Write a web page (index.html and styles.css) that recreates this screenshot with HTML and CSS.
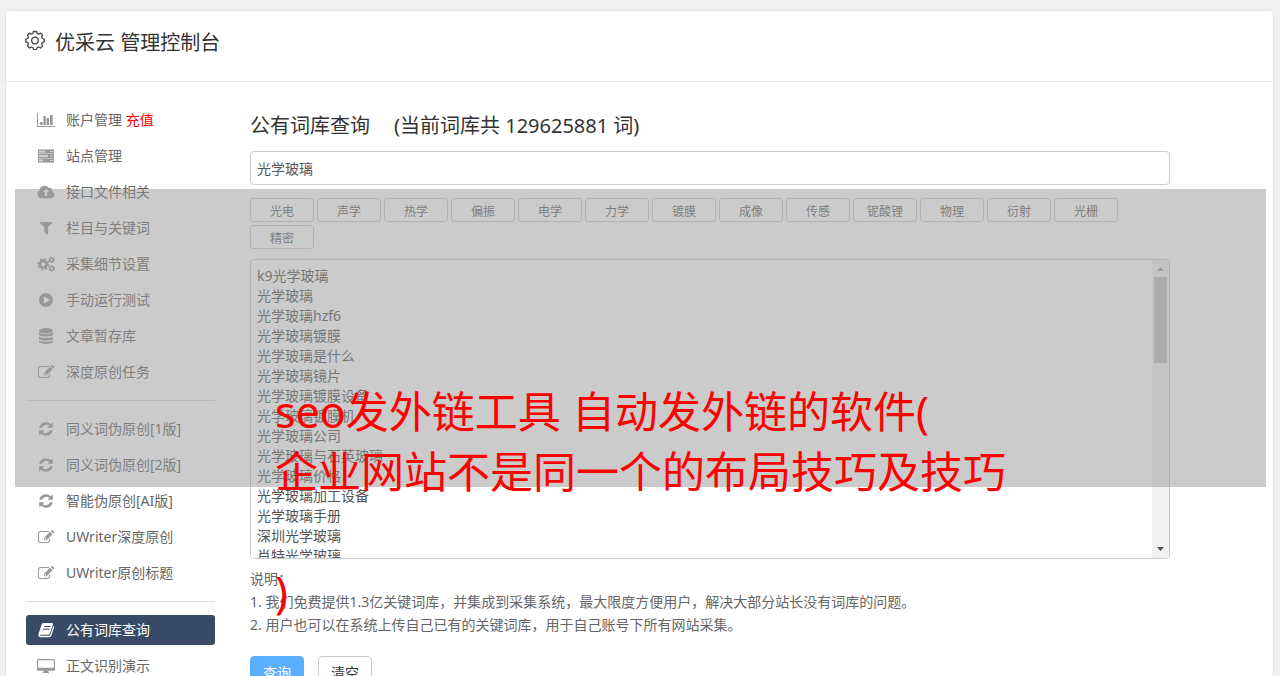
FILE: index.html
```html
<!DOCTYPE html>
<html lang="zh-CN">
<head>
<meta charset="utf-8">
<title>优采云 管理控制台</title>
<link rel="stylesheet" href="styles.css">
</head>
<body>
<svg class="sprite" aria-hidden="true">
  <symbol id="i-chart" viewBox="0 0 20 16"><path d="M1 1h1v13h17v1H1z"/><path d="M4 10h2.500v3H4zM7.300 4h2.400v9H7.300zM10.500 6H13v7h-2.500zM14 3h2.700v10H14z"/></symbol>
  <symbol id="i-server" viewBox="0 0 20 16"><path opacity=".45" d="M2 1.500h16v4H2zM2 6h16v4H2zM2 10.500h16v4H2z"/><path fill-rule="evenodd" d="M2 1.500h16v4H2zM3 2.500v2h6v-2zM14 3v1h3V3zM2 6h16v4H2zM3 7v2h9V7zM14 7.500v1h3v-1zM2 10.500h16v4H2zM3 11.500v2h4v-2zM14 12v1h3v-1z"/></symbol>
  <symbol id="i-cloud" viewBox="0 0 20 16"><path fill-rule="evenodd" d="M5.500 14.300A4.300 4.300 0 0 1 3.600 6.300 4.900 4.900 0 0 1 12.600 4a2.700 2.700 0 0 1 3.500 3.400 3.600 3.600 0 0 1-.9 6.900zM10 4.700 6.500 8.300h2.300v3.700h2.400V8.300h2.300z"/></symbol>
  <symbol id="i-filter" viewBox="0 0 20 16"><path d="M4.500 2h11.300c.6 0 .8.600.4 1L12 7.300v6.900c0 .6-.6.800-1 .4l-2.300-2.200c-.2-.2-.3-.3-.3-.6V7.300L4 3c-.4-.4-.1-1 .5-1z"/></symbol>
  <symbol id="i-cogs" viewBox="0 0 20 16"><circle cx="7.300" cy="8.300" r="3.400" fill="none" stroke="currentColor" stroke-width="2.600"/><circle cx="7.300" cy="8.300" r="5.300" fill="none" stroke="currentColor" stroke-width="1.600" stroke-dasharray="2.080 2.080"/><circle cx="15.600" cy="3.800" r="1.900" fill="none" stroke="currentColor" stroke-width="1.500"/><circle cx="15.600" cy="3.800" r="2.800" fill="none" stroke="currentColor" stroke-dasharray="1.466 1.466"/><circle cx="15.600" cy="12.500" r="1.900" fill="none" stroke="currentColor" stroke-width="1.500"/><circle cx="15.600" cy="12.500" r="2.800" fill="none" stroke="currentColor" stroke-dasharray="1.466 1.466"/></symbol>
  <symbol id="i-play" viewBox="0 0 20 16"><path fill-rule="evenodd" d="M10 1a7 7 0 1 0 0 14 7 7 0 0 0 0-14zM7.800 4.300 14 8l-6.200 3.700z"/></symbol>
  <symbol id="i-db" viewBox="0 0 20 16"><ellipse cx="10" cy="2.800" rx="7" ry="2.700"/><path d="M3 4.600c3 2.200 11 2.200 14 0v2c-1 2.700-13 2.700-14 0zM3 8.400c3 2.200 11 2.200 14 0v2c-1 2.700-13 2.700-14 0zM3 12.200c3 2.200 11 2.200 14 0v1.500c-1 2.900-13 2.900-14 0z"/></symbol>
  <symbol id="i-edit" viewBox="0 0 20 16"><path d="M13.500 2H4.700A2.700 2.700 0 0 0 2 4.700v6.600A2.700 2.700 0 0 0 4.700 14h6.600a2.700 2.700 0 0 0 2.700-2.700V9.500l-1 1v.8c0 .9-.8 1.700-1.700 1.700H4.700C3.800 13 3 12.200 3 11.300V4.700C3 3.800 3.800 3 4.700 3h7.900z"/><path fill-rule="evenodd" d="m14 2.700 2.600 2.600-6 6H8V8.700zM8.800 9.200v1.300h1.300l.4-.5-1.200-1.200zM14.700 2l.8-.8c.4-.4.8-.4 1.200 0l1.400 1.400c.4.400.4.800 0 1.200l-.8.800z"/></symbol>
  <symbol id="i-sync" viewBox="0 0 20 16"><path d="M3.200 6.800a7 7 0 0 1 11.700-3.500L16.800 1.400v5.400h-5.400l2-2a4.900 4.900 0 0 0-7.500 2zM16.800 9.200a7 7 0 0 1-11.700 3.500l-1.900 1.900V9.200h5.400l-2 2a4.900 4.900 0 0 0 7.500-2z"/></symbol>
  <symbol id="i-book" viewBox="0 0 20 16"><path fill-rule="evenodd" d="M7.700 1h8c1 0 1.500.7 1.200 1.600l-3 9c-.2.800-.8 1.200-1.600 1.200H4.600c-.8 0-.8.900.1.900h8.400c.7 0 1.100-.3 1.300-.9L17.200 4c.8.200 1.100.8.800 1.700l-2.600 7.800c-.4 1.100-1.200 1.700-2.300 1.700H4.700c-1.700 0-2.800-1.200-2.300-2.900L5.600 2.500C6 1.500 6.700 1 7.700 1zM8.300 4l-.3 1h6.300l.3-1zM7.400 6.800l-.3 1h6.300l.3-1z"/></symbol>
  <symbol id="i-screen" viewBox="0 0 20 16"><path fill-rule="evenodd" d="M2.400 1h15.200c.8 0 1.400.6 1.400 1.400v9c0 .8-.6 1.400-1.400 1.400h-5.300c0 1 .9 1.300.9 2.200H6.800c0-.9.900-1.200.9-2.200H2.400C1.600 12.800 1 12.200 1 11.400v-9C1 1.600 1.600 1 2.400 1zM2.200 2.200v7.500h15.600V2.200z"/></symbol>
</svg>

<div class="panel">
  <header class="head">
    <svg class="gear" viewBox="0 0 20 20" aria-hidden="true"><path d="M8.500 1.500h3l.6 2 1.500.6 1.900-1 2.100 2.100-1 1.900.6 1.400 2 .6v2.800l-2 .7-.6 1.400 1 1.900-2.100 2.100-1.900-1-1.500.6-.6 2h-3l-.6-2-1.500-.6-1.900 1-2.100-2.100 1-1.900-.6-1.400-2-.7V9.100l2-.6.6-1.400-1-1.900 2.100-2.100 1.900 1 1.500-.6z"/><circle cx="10" cy="10.500" r="3.300"/></svg>
    <h1>优采云 管理控制台</h1>
  </header>

  <div class="body">
    <nav class="side">
      <a href="#"><svg><use href="#i-chart"/></svg><span>账户管理 <b>充值</b></span></a>
      <a href="#"><svg><use href="#i-server"/></svg>站点管理</a>
      <a href="#"><svg><use href="#i-cloud"/></svg>接口文件相关</a>
      <a href="#"><svg><use href="#i-filter"/></svg>栏目与关键词</a>
      <a href="#"><svg><use href="#i-cogs"/></svg>采集细节设置</a>
      <a href="#"><svg><use href="#i-play"/></svg>手动运行测试</a>
      <a href="#"><svg><use href="#i-db"/></svg>文章暂存库</a>
      <a href="#"><svg><use href="#i-edit"/></svg>深度原创任务</a>
      <hr>
      <a href="#"><svg><use href="#i-sync"/></svg>同义词伪原创[1版]</a>
      <a href="#"><svg><use href="#i-sync"/></svg>同义词伪原创[2版]</a>
      <a href="#"><svg><use href="#i-sync"/></svg>智能伪原创[AI版]</a>
      <a href="#"><svg><use href="#i-edit"/></svg>UWriter深度原创</a>
      <a href="#"><svg><use href="#i-edit"/></svg>UWriter原创标题</a>
      <hr>
      <a href="#" class="active"><svg><use href="#i-book"/></svg>公有词库查询</a>
      <a href="#"><svg><use href="#i-screen"/></svg>正文识别演示</a>
    </nav>

    <main class="main">
      <h2><label for="word">公有词库查询</label><span>(当前词库共 129625881 词)</span></h2>
      <input class="word" id="word" type="text" value="光学玻璃">
      <div class="tags">
        <button type="button">光电</button>
        <button type="button">声学</button>
        <button type="button">热学</button>
        <button type="button">偏振</button>
        <button type="button">电学</button>
        <button type="button">力学</button>
        <button type="button">镀膜</button>
        <button type="button">成像</button>
        <button type="button">传感</button>
        <button type="button">铌酸锂</button>
        <button type="button">物理</button>
        <button type="button">衍射</button>
        <button type="button">光栅</button>
        <button type="button">精密</button>
      </div>
      <div class="results">
        <textarea aria-label="查询" spellcheck="false">k9光学玻璃
光学玻璃
光学玻璃hzf6
光学玻璃镀膜
光学玻璃是什么
光学玻璃镜片
光学玻璃镀膜设备
光学玻璃镀膜机
光学玻璃公司
光学玻璃与石英玻璃
光学玻璃价格
光学玻璃加工设备
光学玻璃手册
深圳光学玻璃
肖特光学玻璃</textarea>
        <div class="bar" aria-hidden="true">
          <svg class="arrow up" viewBox="0 0 7 4"><path d="M0 4h7L3.500 0z"/></svg>
          <div class="thumb"></div>
          <svg class="arrow down" viewBox="0 0 7 4"><path d="M0 0h7L3.500 4z"/></svg>
        </div>
      </div>
      <div class="notes">
        <p>说明：</p>
        <p>1. 我们免费提供1.3亿关键词库，并集成到采集系统，最大限度方便用户，解决大部分站长没有词库的问题。</p>
        <p>2. 用户也可以在系统上传自己已有的关键词库，用于自己账号下所有网站采集。</p>
      </div>
      <div class="actions">
        <button type="button" class="primary">查询</button>
        <button type="button">清空</button>
      </div>
    </main>
  </div>
</div>

<div class="banner">seo发外链工具 自动发外链的软件(<br>企业网站不是同一个的布局技巧及技巧<br><br>)</div>
</body>
</html>
```
FILE: styles.css
```css
* {
  box-sizing: border-box;
}

body {
  margin: 0;
  padding: 10px 6px 10px 5px;
  background: #f1f1f1;
  color: #666;
  font: 14px/20px "Noto Sans", "Noto Sans CJK SC", sans-serif;
  position: relative;
}

button,
input,
textarea {
  font: inherit;
  color: inherit;
}

h1,
h2,
p {
  margin: 0;
  font-weight: 400;
}

.sprite {
  position: absolute;
  width: 0;
  height: 0;
}

.panel {
  background: #fff;
  border: 1px solid #e5e5e5;
  border-radius: 4px;
}

.head {
  display: flex;
  align-items: flex-start;
  gap: 10px;
  height: 71px;
  padding: 16px 19px;
  border-bottom: 1px solid #e5e5e5;
}

.head h1 {
  font-size: 20px;
  line-height: 32px;
  color: #333;
}

.gear {
  width: 20px;
  height: 20px;
  margin-top: 3px;
  fill: none;
  stroke: #444;
  stroke-width: 1.3;
  stroke-linejoin: round;
}

.body {
  display: flex;
  gap: 35px;
  padding: 23px 103px 20px 20px;
}

.side {
  flex: 0 0 189px;
  display: flex;
  flex-direction: column;
  gap: 6px;
}

.side a {
  display: flex;
  align-items: center;
  gap: 10px;
  height: 30px;
  padding: 0 10px;
  border-radius: 3px;
  color: #666;
  text-decoration: none;
  white-space: nowrap;
}

.side a svg {
  width: 20px;
  height: 16px;
  fill: currentColor;
  color: #999;
}

.side b {
  font-weight: 400;
  color: #f00;
}

.side .active,
.side .active svg {
  color: #fff;
}

.side .active {
  background: #394a66;
}

.side hr {
  width: 100%;
  height: 1px;
  margin: 7px 0;
  border: 0;
  background: #ddd;
}

.main {
  flex: 1;
  min-width: 0;
}

.main h2 {
  display: flex;
  gap: 24px;
  padding: 6px 0 10px;
  font-size: 20px;
  line-height: 30px;
  color: #333;
}

.word {
  display: block;
  width: 100%;
  height: 34px;
  padding: 0 6px;
  border: 1px solid #ccc;
  border-radius: 4px;
  background: #fff;
  color: #555;
}

.tags {
  display: flex;
  flex-wrap: wrap;
  gap: 3px;
  padding: 13px 0 10px;
}

.tags button {
  width: 64px;
  height: 24px;
  padding: 3px 0 0;
  border: 1px solid #ccc;
  border-radius: 3px;
  background: #fff;
  font-size: 12px;
  line-height: 20px;
}

.results {
  display: flex;
  height: 300px;
  border: 1px solid #ccc;
  border-radius: 4px;
  overflow: hidden;
}

.results textarea {
  flex: 1;
  padding: 6px 6px 0;
  border: 0;
  resize: none;
  overflow: hidden;
  background: #fff;
  color: #555;
  line-height: 20px;
}

.bar {
  display: flex;
  flex-direction: column;
  align-items: center;
  width: 17px;
  padding: 7px 0;
  background: #f0f0f0;
}

.arrow {
  width: 7px;
  height: 4px;
  fill: #505050;
}

.arrow.up {
  fill: #a3a3a3;
}

.thumb {
  width: 13px;
  height: 86px;
  margin: 6px 0 auto;
  background: #c1c1c1;
}

.notes {
  padding: 8px 0 20px;
  line-height: 23px;
}

.actions {
  display: flex;
  gap: 14px;
}

.actions button {
  width: 54px;
  height: 34px;
  padding: 0;
  border: 1px solid #ccc;
  border-radius: 4px;
  background: #fff;
  color: #333;
}

.actions .primary {
  border-color: #5aafff;
  background: #5aafff;
  color: #fff;
}

.banner {
  position: absolute;
  top: 189px;
  left: 15px;
  right: 14px;
  height: 298px;
  padding: 193px 0 0 260px;
  background: rgba(151, 151, 151, 0.5);
  color: #f00;
  font-size: 43px;
  line-height: 60px;
  white-space: nowrap;
}
```
